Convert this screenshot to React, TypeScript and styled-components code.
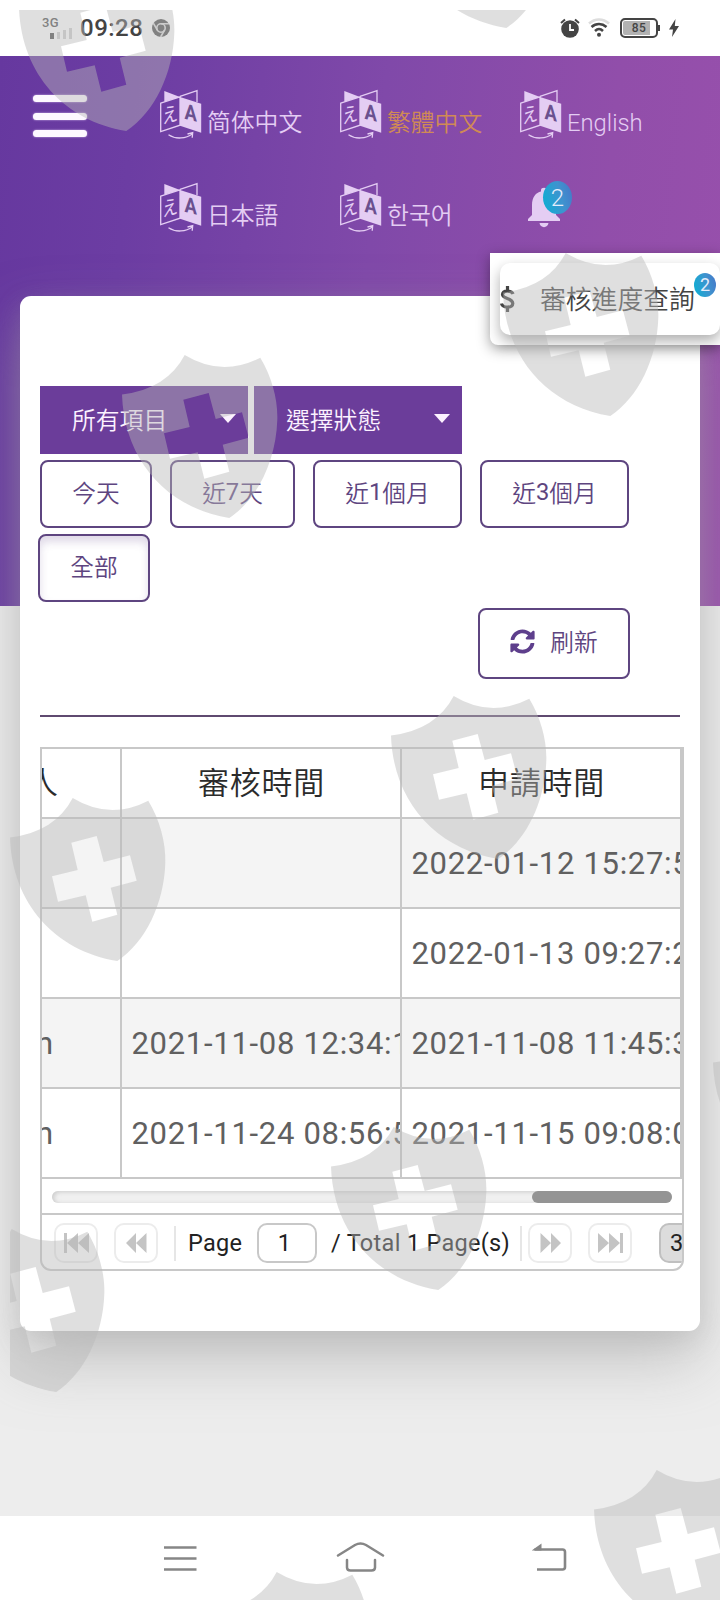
import React from 'react';
import styled, { createGlobalStyle } from 'styled-components';

const GlobalStyle = createGlobalStyle`
  *, *::before, *::after { box-sizing: border-box; }
  body { margin: 0; background: #ededed; font-family: Roboto, "Noto Sans CJK TC", sans-serif; }
  button, input { font: inherit; }
`;

const Screen = styled.div`
  position: relative;
  width: 720px;
  height: 1600px;
  overflow: hidden;
  display: flex;
  flex-direction: column;
  background: #ededed;
`;

/* ---------- status bar ---------- */

const StatusBar = styled.header`
  height: 56px;
  flex: none;
  display: flex;
  align-items: center;
  justify-content: space-between;
  padding: 0 41px 0 42px;
  background: #fff;
  color: #444;
`;

const StatusGroup = styled.div<{ $gap: number }>`
  display: flex;
  align-items: center;
  gap: ${(p) => p.$gap}px;
`;

const Signal = styled.div`
  width: 33px;
  height: 26px;
  display: flex;
  flex-direction: column;
  font-size: 13px;
  line-height: 15px;
  font-weight: 500;
  letter-spacing: 0.3px;
  color: #555;
  svg { margin: -3px 0 0 8px; }
`;

const Clock = styled.span`
  font-size: 24px;
  line-height: 28px;
  font-weight: 500;
  width: 62px;
  letter-spacing: 0.5px;
  margin-left: -1px;
`;

const Battery = styled.div`
  position: relative;
  width: 38px;
  height: 20px;
  margin-left: 2px;
  border: 2px solid #444;
  border-radius: 5px;
  background: linear-gradient(90deg, #b2b2b2 28px, #fff 28px);
  box-shadow: inset 0 0 0 1px #fff;
  font-size: 12px;
  line-height: 16px;
  font-weight: 500;
  text-align: center;
  letter-spacing: 0.5px;
  &::after {
    content: '';
    position: absolute;
    right: -4px;
    top: 5px;
    width: 2px;
    height: 6px;
    background: #444;
  }
`;

/* ---------- purple header ---------- */

const Page = styled.main`
  height: 1460px;
  flex: none;
  display: flex;
  flex-direction: column;
  background: linear-gradient(96deg, #66389f 0%, #6c3da3 18%, #8049a9 50%, #914eaa 80%, #9850ac 100%) 0 0 / 100% 550px no-repeat, #ededed;
`;

const TopNav = styled.nav`
  height: 240px;
  flex: none;
  display: flex;
  padding: 31px 0 0 31px;
`;

const MenuButton = styled.div`
  width: 58px;
  height: 60px;
  margin-right: 71px;
  padding: 8px 2px 0;
  display: flex;
  flex-direction: column;
  gap: 10.5px;
  span {
    height: 7px;
    border-radius: 4px;
    background: #fdf8ff;
    box-shadow: 0 0 2px #d9c2ee;
  }
`;

const LangGrid = styled.div`
  width: 540px;
  display: grid;
  grid-template-columns: repeat(3, 180px);
  grid-auto-rows: 93px;
`;

const LangItem = styled.div<{ $active?: boolean; $font?: string }>`
  display: flex;
  align-items: flex-start;
  gap: 4px;
  color: ${(p) => (p.$active ? '#d08a55' : '#e4cdf3')};
  font-family: Roboto, ${(p) => p.$font ?? '"Noto Sans CJK TC"'}, sans-serif;
  font-size: 23.8px;
  font-weight: 350;
  line-height: 34px;
  span { padding-top: 19px; }
`;

const BellItem = styled.div`
  position: relative;
  padding: 5px 0 0 7px;
`;

const Badge = styled.div<{ $w: number; $h: number; $x: number; $y: number; $size: number }>`
  position: absolute;
  left: ${(p) => p.$x}px;
  top: ${(p) => p.$y}px;
  width: ${(p) => p.$w}px;
  height: ${(p) => p.$h}px;
  border-radius: 50%;
  display: flex;
  align-items: center;
  justify-content: center;
  background: linear-gradient(75deg, #17a9d2 15%, #3f93cf 60%, #4676c8 100%);
  color: #e4ecfb;
  font-size: ${(p) => p.$size}px;
  font-weight: ${(p) => (p.$size > 20 ? 300 : 400)};
  line-height: 1;
`;

const Notice = styled.div`
  position: absolute;
  left: 490px;
  top: 253px;
  width: 230px;
  height: 92px;
  padding: 10px 0 10px 10px;
  overflow: visible;
  border-radius: 0 0 0 8px;
  background: #fff;
  box-shadow: 0 4px 14px rgba(0, 0, 0, 0.38);
`;

const NoticeCard = styled.div`
  position: relative;
  height: 72px;
  display: flex;
  align-items: center;
  border-radius: 10px;
  background: #fff;
  box-shadow: 0 6px 14px rgba(0, 0, 0, 0.32);
  color: #444;
  font-size: 25.8px;
  font-weight: 350;
  white-space: nowrap;
  padding-bottom: 4px;
  svg { margin: 4px 25px 0 0; }
`;

/* ---------- content card ---------- */

const Card = styled.section`
  width: 680px;
  height: 1035px;
  flex: none;
  margin: 0 20px;
  padding: 90px 16px 0 20px;
  border-radius: 11px;
  background: #fff;
  box-shadow: 0 30px 60px rgba(155, 155, 155, 0.5), 0 8px 24px rgba(165, 165, 165, 0.26);
`;

const SelectRow = styled.div`
  display: flex;
  gap: 6px;
  margin-bottom: 6px;
`;

const Select = styled.div`
  width: 208px;
  height: 68px;
  padding: 0 12px 3px 32px;
  display: flex;
  align-items: center;
  justify-content: space-between;
  background: #6b3d9a;
  color: #fcf2ff;
  font-size: 23.8px;
  font-weight: 350;
`;

const ButtonRow = styled.div`
  display: flex;
  gap: 18px;
  margin-bottom: 6px;
`;

const OutlineButton = styled.button<{ $w: number; $h?: number; $pressed?: boolean }>`
  width: ${(p) => p.$w}px;
  height: ${(p) => p.$h ?? 68}px;
  flex: none;
  margin: 0 0 0 ${(p) => (p.$pressed ? -2 : 0)}px;
  padding: 0 0 ${(p) => (p.$h ? 5 : 4)}px;
  display: flex;
  align-items: center;
  justify-content: center;
  border: 2px solid #5e4580;
  border-radius: 8px;
  background: #fff;
  color: #5e4580;
  font-size: 23.7px;
  font-weight: 350;
  box-shadow: ${(p) => (p.$pressed ? 'inset 0 6px 9px rgba(100, 70, 140, 0.2)' : 'none')};
  svg { margin-right: 15px; }
`;

const Digit = styled.span`
  font-weight: 400;
`;

const RefreshRow = styled.div`
  display: flex;
  padding-left: 438px;
  margin-bottom: 36px;
`;

const Rule = styled.div`
  width: 640px;
  height: 2px;
  margin-bottom: 30px;
  background: #5f4a70;
`;

/* ---------- data grid ---------- */

const Grid = styled.div`
  width: 644px;
  height: 524px;
  border: 2px solid #c8c8c8;
  border-radius: 0 0 11px 11px;
  overflow: hidden;
`;

const GridBody = styled.div`
  height: 430px;
  border-right: 2px solid #c8c8c8;
`;

const Row = styled.div<{ $head?: boolean; $odd?: boolean }>`
  height: ${(p) => (p.$head ? 70 : 90)}px;
  display: grid;
  grid-template-columns: 80px 280px 1fr;
  border-bottom: 2px solid #c8c8c8;
  background: ${(p) => (p.$odd ? '#f4f4f4' : '#fff')};
  color: ${(p) => (p.$head ? '#2b2b2b' : '#606060')};
  font-weight: ${(p) => (p.$head ? 350 : 400)};
  line-height: ${(p) => (p.$head ? 70 : 89)}px;
`;

const Cell = styled.div<{ $center?: boolean; $clipLeft?: number }>`
  overflow: hidden;
  white-space: nowrap;
  text-align: ${(p) => (p.$center ? 'center' : 'left')};
  padding-left: ${(p) => (p.$center ? 1 : p.$clipLeft ? 0 : 9.5)}px;
  border-right: 2px solid #c8c8c8;
  font-size: 31px;
  letter-spacing: 0.7px;
  &:last-child { border-right: 0; }
  span { margin-left: ${(p) => -(p.$clipLeft ?? 0)}px; }
`;

const ScrollArea = styled.div`
  height: 36px;
  padding: 12px 10px 0;
  border-bottom: 2px solid #c8c8c8;
`;

const Track = styled.div`
  height: 12px;
  display: flex;
  justify-content: flex-end;
  border-radius: 6px;
  background: #f0f0f0;
  box-shadow: inset 2px 1px 4px #ccc;
`;

const Thumb = styled.div`
  width: 140px;
  border-radius: 6px;
  background: #949494;
`;

const Pager = styled.div`
  width: 700px;
  height: 54px;
  padding: 2px 0 0 12px;
  display: flex;
  align-items: center;
  color: #222;
  font-size: 23.5px;
  letter-spacing: 0.3px;
  white-space: nowrap;
`;

const PagerButton = styled.div<{ $ml?: number }>`
  width: 44px;
  height: 40px;
  flex: none;
  margin-left: ${(p) => p.$ml ?? 0}px;
  display: flex;
  align-items: center;
  justify-content: center;
  border: 2px solid #ececec;
  border-radius: 10px;
`;

const Divider = styled.div<{ $ml: number }>`
  width: 2px;
  height: 35px;
  flex: none;
  margin-left: ${(p) => p.$ml}px;
  background: #e6e6e6;
`;

const PagerText = styled.span<{ $ml: number; $w: number }>`
  width: ${(p) => p.$w}px;
  flex: none;
  margin-left: ${(p) => p.$ml}px;
`;

const PageInput = styled.div`
  width: 60px;
  height: 40px;
  flex: none;
  margin-left: 12px;
  padding-right: 5px;
  line-height: 36px;
  text-align: center;
  border: 2px solid #c8c8c8;
  border-radius: 10px;
`;

const PageSize = styled.div`
  width: 60px;
  height: 40px;
  flex: none;
  margin-left: 27px;
  padding-left: 9px;
  line-height: 36px;
  border: 2px solid #c0c0c0;
  border-radius: 10px;
  background: #dcdcdc;
`;

/* ---------- system navigation ---------- */

const SystemNav = styled.footer`
  height: 84px;
  flex: none;
  display: flex;
  align-items: flex-start;
  padding: 25px 0 0 163px;
  background: #fff;
  svg { flex: none; }
  svg + svg { margin-left: 138px; }
  svg + svg + svg { margin-left: 147px; }
`;

/* ---------- watermark ---------- */

const WatermarkLayer = styled.div`
  position: absolute;
  top: 10px;
  left: 10px;
  right: 0;
  bottom: 0;
  overflow: hidden;
  pointer-events: none;
`;

const Shield = styled.svg<{ $x: number; $y: number }>`
  position: absolute;
  left: ${(p) => p.$x - 10}px;
  top: ${(p) => p.$y - 10}px;
  width: 156px;
  height: 164px;
  fill: rgba(183, 183, 183, 0.45);
`;

const shields = [
  [19, -32],
  [399, -135],
  [503, 253],
  [122, 355],
  [391, 696],
  [10, 798],
  [331, 1127],
  [-51, 1229],
  [713, 1023],
  [214, 1572],
  [594, 1470],
];

const TranslateIcon = () => (
  <svg width="43" height="52" viewBox="0 -0.7 43 52" fill="none" stroke="#e4cdf3" strokeWidth="1.3">
    <path d="M4.3 3.3L20 9.3L4.3 14Z" fill="#e4cdf3" stroke="none" />
    <path d="M20 8.7L37 3V14.5" />
    <path d="M0.7 15.5L20 9.3V37.5L0.7 44Z" />
    <path d="M20 9.3L41.2 16V45L20 38Z" fill="#e4cdf3" stroke="none" />
    <path d="M8.5 47C16 52 26 51 32.5 46M27.5 46.3L32.7 45L32.2 50" />
    <text x="0" y="0" transform="matrix(.82 -.24 0 1.05 2.3 36.5)" fontFamily="Noto Sans CJK JP" fontSize="19.5" fontWeight="400" fill="#e4cdf3" stroke="none">え</text>
    <text x="0" y="0" transform="matrix(.9 .22 0 1.05 24.6 31)" fontFamily="Roboto" fontSize="20.5" fontWeight="700" fill="#6a508f" stroke="none">A</text>
  </svg>
);

const Caret = () => (
  <svg width="16" height="9" viewBox="0 0 16 9">
    <path d="M0 0H16L8 9Z" fill="#fcf2ff" />
  </svg>
);

const Arrows = ({ flip, bar }: { flip?: boolean; bar?: boolean }) => (
  <svg width="25" height="22" viewBox="0 0 25 22" fill="#c4c4c4" transform={flip ? 'scale(-1 1)' : undefined}>
    {bar && <path d="M0 1H3V21H0Z" />}
    <path d={bar ? 'M14 1V21L3 11ZM25 1V21L14 11Z' : 'M12 1V21L2 11ZM22.5 1V21L12 11Z'} />
  </svg>
);

const rows = [
  ['', '', '2022-01-12 15:27:53'],
  ['', '', '2022-01-13 09:27:21'],
  ['n', '2021-11-08 12:34:18', '2021-11-08 11:45:38'],
  ['n', '2021-11-24 08:56:51', '2021-11-15 09:08:01'],
];

export default function App() {
  return (
    <>
      <GlobalStyle />
      <Screen>
        <StatusBar>
          <StatusGroup $gap={6}>
            <Signal>
              3G
              <svg width="24" height="13" viewBox="0 0 24 13">
                <path d="M0 6H4V12H0Z" fill="#555" />
                <path d="M7 5H10V12H7ZM13 3H16V12H13ZM19 1H22V12H19Z" fill="#d0d0d0" />
              </svg>
            </Signal>
            <Clock>09:28</Clock>
            <svg width="24" height="20" viewBox="-3 0 24 20">
              <circle cx="10" cy="10" r="9" fill="#555" />
              <circle cx="10" cy="10" r="4.2" fill="#555" stroke="#ddd" strokeWidth="1.6" />
              <path d="M10 5.8H18M6.3 12L2.3 5.2M13.6 12L9.6 19" stroke="#ddd" strokeWidth="1.6" />
            </svg>
          </StatusGroup>
          <StatusGroup $gap={8}>
            <svg width="20" height="20" viewBox="0 0 20 20" fill="none">
              <circle cx="10" cy="11" r="8.8" fill="#444" />
              <path d="M1 5L5 1.5M19 5L15 1.5" stroke="#444" strokeWidth="2" />
              <path d="M10 6V12H14" stroke="#fff" strokeWidth="1.8" />
            </svg>
            <svg width="22" height="20" viewBox="0 0 22 20" fill="none" strokeWidth="2.5">
              <path d="M1 5.500C7 0 15 0 21 5.500" stroke="#ddd" />
              <path d="M3.500 9C8 5 14 5 18.500 9M7 13C9.5 10.5 12.5 10.5 15 13" stroke="#444" />
              <circle cx="11" cy="16.7" r="2" fill="#444" />
            </svg>
            <Battery>85</Battery>
            <svg width="13" height="18" viewBox="-3 0 13 18" fill="#444">
              <path d="M6.5 0L0 10.5H4L3 18L10 7H5.8Z" />
            </svg>
          </StatusGroup>
        </StatusBar>

        <Page>
          <TopNav>
            <MenuButton>
              <span />
              <span />
              <span />
            </MenuButton>
            <LangGrid>
              <LangItem $font={'"Noto Sans CJK SC"'}><TranslateIcon /><span>简体中文</span></LangItem>
              <LangItem $active><TranslateIcon /><span>繁體中文</span></LangItem>
              <LangItem><TranslateIcon /><span>English</span></LangItem>
              <LangItem $font={'"Noto Sans CJK JP"'}><TranslateIcon /><span>日本語</span></LangItem>
              <LangItem $font={'"Noto Sans CJK KR"'}><TranslateIcon /><span>한국어</span></LangItem>
              <BellItem>
                <svg width="34" height="44" viewBox="0 0 34 44" fill="#e4cdf3">
                  <path d="M1 36V34L5 30V20C5 12 9 7.500 14 6.500V5C14 2 20 2 20 5V6.500C25 7.500 29 12 29 20V30L33 34V36Z" />
                  <path d="M12.500 38H21.500C21 43.500 13 43.500 12.500 38Z" />
                </svg>
                <Badge $w={29} $h={33} $x={23} $y={1} $size={24}>2</Badge>
              </BellItem>
            </LangGrid>
          </TopNav>

          <Card>
            <SelectRow>
              <Select>所有項目<Caret /></Select>
              <Select>選擇狀態<Caret /></Select>
            </SelectRow>
            <ButtonRow>
              <OutlineButton $w={112}>今天</OutlineButton>
              <OutlineButton $w={125}>近<Digit>7</Digit>天</OutlineButton>
              <OutlineButton $w={149}>近<Digit>1</Digit>個月</OutlineButton>
              <OutlineButton $w={149}>近<Digit>3</Digit>個月</OutlineButton>
            </ButtonRow>
            <ButtonRow>
              <OutlineButton $w={112} $pressed>全部</OutlineButton>
            </ButtonRow>
            <RefreshRow>
              <OutlineButton $w={152} $h={71}>
                <svg width="25" height="25" viewBox="0 0 512 512" fill="#5e3f8c">
                  <path d="M370.700 133.300C339.500 104 298.900 88 255.800 88c-77.500.1-144.300 53.200-162.800 126.900-1.300 5.400-6.100 9.100-11.700 9.100H24.100c-7.500 0-13.200-6.800-11.800-14.200C33.900 94.900 134.800 8 256 8c66.400 0 126.800 26.100 171.300 68.700L463 41C478.100 25.900 504 36.600 504 57.900V192c0 13.300-10.700 24-24 24H345.900c-21.400 0-32.100-25.900-17-41l41.800-41.700zM32 296h134.100c21.400 0 32.100 25.900 17 41l-41.800 41.800c31.300 29.300 71.800 45.300 114.900 45.300 77.400-.1 144.300-53.100 162.800-126.800 1.300-5.400 6.100-9.100 11.700-9.100h57.300c7.500 0 13.200 6.800 11.800 14.200C478.100 417.100 377.200 504 256 504c-66.400 0-126.800-26.100-171.300-68.700L49 471c-15.100 15.100-41 4.400-41-16.900V320c0-13.300 10.700-24 24-24z" />
                </svg>
                刷新
              </OutlineButton>
            </RefreshRow>
            <Rule />

            <Grid>
              <GridBody>
                <Row $head>
                  <Cell $clipLeft={15}><span>人</span></Cell>
                  <Cell $center>審核時間</Cell>
                  <Cell $center>申請時間</Cell>
                </Row>
                {rows.map(([person, reviewed, applied], i) => (
                  <Row key={applied} $odd={i % 2 === 0}>
                    <Cell $clipLeft={6}><span>{person}</span></Cell>
                    <Cell>{reviewed}</Cell>
                    <Cell>{applied}</Cell>
                  </Row>
                ))}
              </GridBody>
              <ScrollArea>
                <Track><Thumb /></Track>
              </ScrollArea>
              <Pager>
                <PagerButton><Arrows bar /></PagerButton>
                <PagerButton $ml={16}><Arrows /></PagerButton>
                <Divider $ml={16} />
                <PagerText $ml={12} $w={57}>Page</PagerText>
                <PageInput>1</PageInput>
                <PagerText $ml={14} $w={179}>/ Total 1 Page(s)</PagerText>
                <Divider $ml={10} />
                <PagerButton $ml={6}><Arrows flip /></PagerButton>
                <PagerButton $ml={16}><Arrows flip bar /></PagerButton>
                <PageSize>30</PageSize>
              </Pager>
            </Grid>
          </Card>
        </Page>

        <SystemNav>
          <svg width="34" height="34" viewBox="0 0 34 34" fill="none" stroke="#868686" strokeWidth="2.6">
            <path d="M1 6.500H33.500M1 17.500H33.500M1 28.500H33.500" />
          </svg>
          <svg width="50" height="34" viewBox="-0.5 0 50 34" fill="none" stroke="#868686" strokeWidth="2.500" strokeLinecap="round">
            <path d="M2.500 14.500L19.500 4Q25 1 30.500 4L47.500 14.500" />
            <path d="M11.500 19V26.500Q11.500 29.500 15 29.500H36Q39.500 29.500 39.500 26.500V19" />
          </svg>
          <svg width="36" height="34" viewBox="0.5 0 36 34" fill="none" stroke="#868686" strokeWidth="2.600">
            <path d="M3 8.500H31Q33.500 8.500 33.500 11V26Q33.500 28.500 31 28.500H5.500" />
            <path d="M0 9.500L10 2.500V9.500Z" fill="#868686" stroke="none" />
          </svg>
        </SystemNav>

        <Notice>
          <NoticeCard>
            <svg width="15" height="26" viewBox="0 0 15 26" fill="none" stroke="#444" strokeWidth="3.2">
              <path d="M13 8C12 4.500 3 3.500 2.500 8.300C2.300 13 13 12 12.800 17.500C12.500 22.500 2.500 22 1.500 17.500M7.500 0V4.500M7.500 21V26" />
            </svg>
            審核進度查詢
            <Badge $w={22} $h={24} $x={194} $y={10} $size={18}>2</Badge>
          </NoticeCard>
        </Notice>

        <WatermarkLayer>
          {shields.map(([x, y]) => (
            <Shield key={`${x}/${y}`} $x={x} $y={y} viewBox="0 0 156 164">
              <path
                fillRule="evenodd"
                d="M0 39.500Q45 34 62.700 0Q100 22.600 138.300 2.700C150 22 156 45 155.300 65C154 105 136 144 107.300 163C45 153 2 105 0 39.500ZM61.300 44.700L86.700 38L93.700 64L120 57.300L126.700 82.700L100.700 89.700L107.300 116.700L82.300 123.700L75.700 97.300L48 103.700L42 78.300L67.700 72Z"
              />
            </Shield>
          ))}
        </WatermarkLayer>
      </Screen>
    </>
  );
}
